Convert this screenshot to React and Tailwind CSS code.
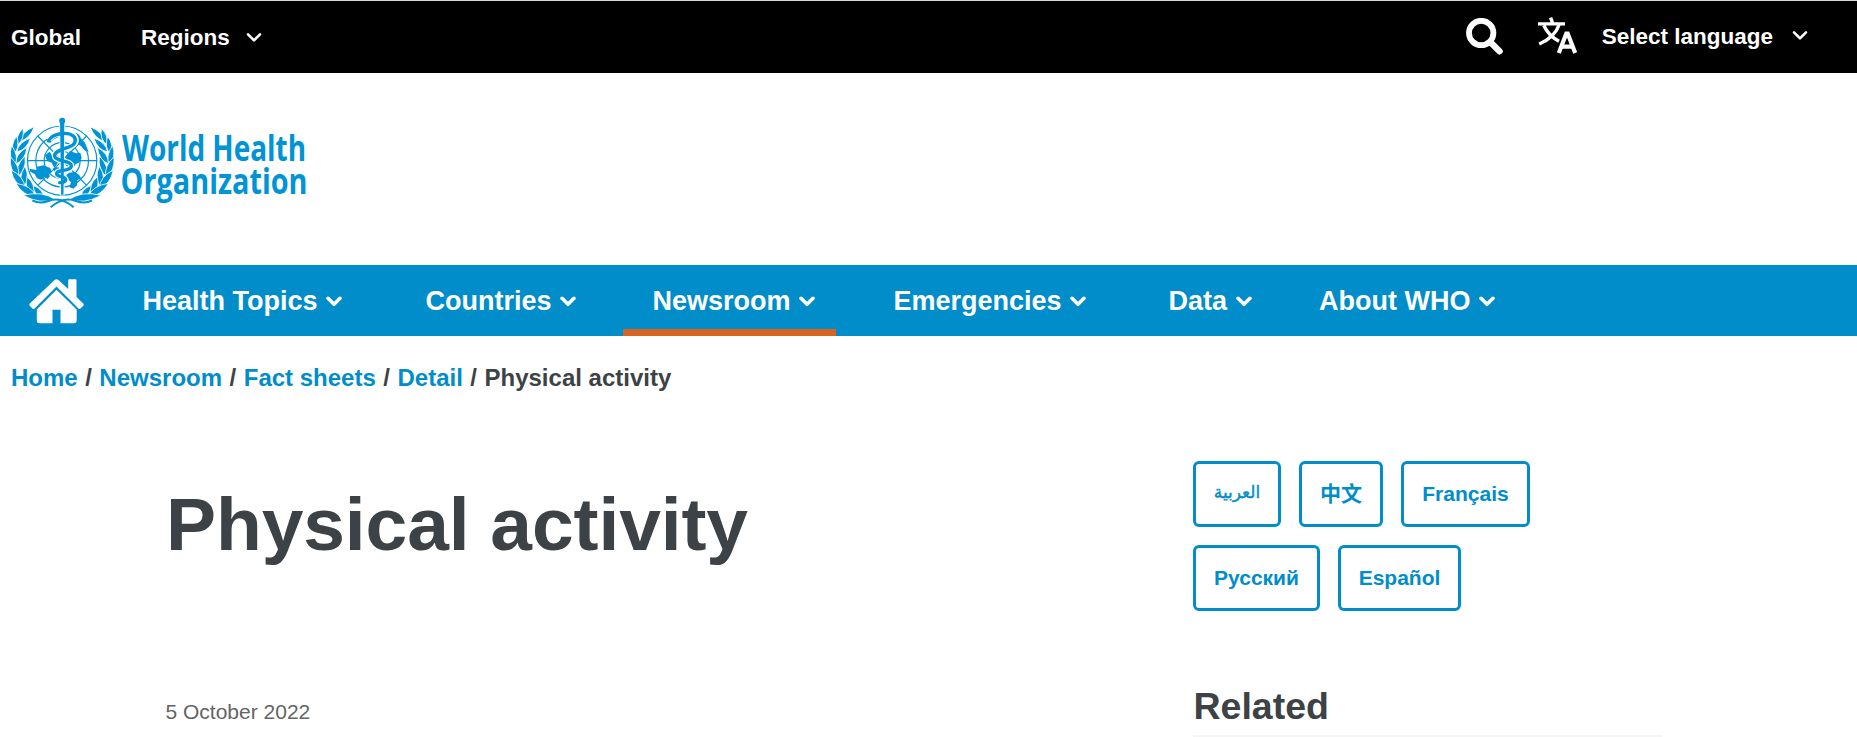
const Chevron = ({ className, weight = 3.6 }) => (
  <svg viewBox="0 0 16 11" className={className} fill="none" stroke="currentColor" strokeWidth={weight} strokeLinecap="round" strokeLinejoin="round">
    <path d="M2 2.3 8 8.3 14 2.3" />
  </svg>
);

// Laurel leaves of the left branch: base x, base y, tip x, tip y, width
const leaves = [
  [44, 88, 88, 44, 18],
  [38, 98, 54, 49, 17],
  [35, 120, 77, 78, 19],
  [27, 126, 35, 72, 18],
  [32, 156, 66, 106, 20],
  [30, 160, 20, 100, 19],
  [38, 194, 60, 132, 21],
  [40, 196, 16, 134, 21],
  [55, 226, 60, 162, 22],
  [60, 228, 18, 174, 22],
  [84, 250, 66, 194, 23],
  [94, 254, 32, 214, 23],
  [116, 260, 84, 220, 20],
  [150, 262, 54, 250, 24],
];

function leafPath([bx, by, tx, ty, w]) {
  const dx = tx - bx;
  const dy = ty - by;
  const len = Math.hypot(dx, dy);
  const nx = (-dy / len) * w * 0.9;
  const ny = (dx / len) * w * 0.9;
  const mx = bx + dx * 0.42;
  const my = by + dy * 0.42;
  return `M${bx} ${by}Q${mx + nx} ${my + ny} ${tx} ${ty}Q${mx - nx} ${my - ny} ${bx} ${by}Z`;
}

const Branch = () => (
  <g>
    {leaves.map((l, i) => (
      <path key={i} d={leafPath(l)} stroke="#fff" strokeWidth="2.5" />
    ))}
  </g>
);

const Emblem = () => (
  <svg viewBox="0 0 345 300" className="h-[100px] w-[115px] shrink-0" fill="#0093d5">
    <Branch />
    <g transform="translate(343 0) scale(-1 1)">
      <Branch />
    </g>
    <g fill="none" stroke="#0093d5" strokeWidth="3.6">
      <circle cx="171.5" cy="146" r="104" />
      <circle cx="171.5" cy="146" r="79" />
      <circle cx="171.5" cy="146" r="54" />
      <circle cx="171.5" cy="146" r="29" />
      <path d="M67 146H276M98 72 245 220M245 72 98 220" />
    </g>
    <path d="M74 170 94 174 96 164 116 160 126 164 136 168 140 180 130 185 135 192 128 201 120 195 108 203 96 199 89 186 76 179Z" />
    <path d="M126 86 134 70 152 60 163 64 160 76 146 82 136 92 126 91Z" />
    <path d="M212 62 222 68 230 82 240 92 246 108 251 120 238 115 228 102 217 95 218 80Z" />
    <path d="M184 130 196 116 212 124 226 122 230 138 222 152 212 156 206 166 190 166 182 156Z" />
    <path d="M120 130 134 119 142 132 154 138 158 154 150 164 140 152 126 146Z" />
    <path d="M192 182 210 180 222 188 228 198 217 205 216 220 205 230 194 226 198 210 186 200 184 190Z" />
    <path d="M144 168 162 166 162 182 152 188Z" />
    <path
      d="M132 84C144 62 188 56 207 71C219 84 212 98 194 105C174 113 146 118 149 133C152 149 200 145 199 162C198 180 154 170 155 186C156 194 172 192 180 199C186 205 180 213 166 212"
      fill="none"
      stroke="#fff"
      strokeWidth="17"
    />
    <path d="M165 30H178L176 248H167Z" stroke="#fff" strokeWidth="5" />
    <path
      d="M132 84C144 64 188 58 205 72C217 84 210 98 194 104C174 112 146 118 149 133C152 149 200 145 199 162C198 180 154 170 155 186C156 194 172 192 180 199C186 205 180 212 164 212"
      fill="none"
      stroke="#0093d5"
      strokeWidth="10"
      strokeLinecap="round"
    />
    <path d="M165 28H178L175.5 248H168.500Z" />
    <circle cx="171.500" cy="26" r="9" />
    <g fill="none" stroke="#0093d5" strokeWidth="6">
      <path d="M82 265Q104 277 130 267T180 269Q194 275 206 286" />
      <path d="M261 265Q239 277 213 267T163 269Q149 275 137 286" />
    </g>
  </svg>
);

const HomeIcon = () => (
  <svg viewBox="0 0 55 45" className="h-[45px] w-[55px]" fill="#fff">
    <path d="M25.500 1Q27.500-.6 29.500 1L39.200 10V1.200Q39.200.2 40.200.2H46.500Q47.500.2 47.500 1.200V18L54.200 24.600Q55.200 26 54 27L51.600 29.600Q50.500 30.500 49.400 29.500L27.500 7.500 5.600 29.500Q4.500 30.500 3.400 29.600L1 27Q-.2 26 .8 24.600Z" />
    <path d="M27.500 10.700 47.700 30.600V41.500Q47.700 44.300 45 44.300H31.500V30.700H23.500V44.300H10.500Q7.800 44.300 7.800 41.500V30.600Z" />
  </svg>
);

const SearchIcon = () => (
  <svg viewBox="0 0 37 37" className="h-[37px] w-[37px]" fill="none" stroke="#fff">
    <circle cx="15.200" cy="15" r="12.200" strokeWidth="5.800" />
    <path d="M24.500 24.300 33.500 33.300" strokeWidth="6.400" strokeLinecap="round" />
  </svg>
);

const TranslateIcon = () => (
  <svg viewBox="0 0 39 37" className="h-[37px] w-[39px]" fill="none" stroke="#fff" strokeWidth="3.400">
    <path d="M12.600.6 14.600 6M0 6.900H27M21.200 7.500C18.500 16 11.500 22.500 1.200 27M5.800 8.500C9 15.500 14 20.500 21 24.200" />
    <path d="M20.800 36 28.300 16.500H29.700L37.200 36M23.500 29.700H34.500" strokeWidth="4.200" />
  </svg>
);

const navItems = [
  { label: "Health Topics", width: "w-[283px] pl-[29px]" },
  { label: "Countries", width: "w-[226.500px] pl-[29px]" },
  { label: "Newsroom", width: "w-[213px] mr-7 pl-[29.500px]", active: true },
  { label: "Emergencies", width: "w-[275px] pl-[29.500px]" },
  { label: "Data", width: "w-[151px] pl-[29.500px]" },
  { label: "About WHO", width: "w-[240px] pl-[29px]" },
];

const crumbs = ["Home", "Newsroom", "Fact sheets", "Detail"];

const LangButton = ({ children, className = "" }) => (
  <a className={`flex h-[66px] items-center justify-center rounded-[6px] border-3 border-[#008dca] text-[21px] font-bold text-[#008dca] ${className}`}>
    {children}
  </a>
);

export default function App() {
  return (
    <div className="flex h-[737px] w-full flex-col overflow-hidden bg-white font-['Liberation_Sans','Noto_Sans_CJK_SC',sans-serif] text-[#3c4245]">
      <div className="flex h-[73px] shrink-0 items-center border-t border-[#d5dbd9] bg-black text-[22.5px] font-bold text-white">
        <a className="ml-[11px] w-[130px] pt-px">Global</a>
        <a className="flex items-center pt-px">
          Regions
          <Chevron className="mb-px ml-4 h-[11px] w-4" weight={2.6} />
        </a>
        <div className="mr-[49px] ml-auto flex items-center">
          <div className="mr-[35px] -mt-px">
            <SearchIcon />
          </div>
          <div className="mr-[25px] -mt-1">
            <TranslateIcon />
          </div>
          <a className="flex items-center">
            Select language
            <Chevron className="mb-[3px] ml-[19px] h-[11px] w-4" weight={2.6} />
          </a>
        </div>
      </div>

      <header className="flex h-48 shrink-0 pt-[39px] pl-[5px]">
        <Emblem />
        <svg viewBox="0 0 190 100" className="h-[100px] w-[190px]" fill="#0093d5">
          <g className="font-['Open_Sans',sans-serif] text-[36px] font-bold">
            <text x="2" y="48.500" textLength="184" lengthAdjust="spacingAndGlyphs">World Health</text>
            <text x="0.500" y="81.500" textLength="187" lengthAdjust="spacingAndGlyphs">Organization</text>
          </g>
        </svg>
      </header>

      <nav className="flex h-[71px] shrink-0 bg-[#008dca] text-[27px] font-bold text-white">
        <a className="w-[113.500px] pt-[13.500px] pl-[29px]">
          <HomeIcon />
        </a>
        {navItems.map((item) => (
          <a
            key={item.label}
            className={`flex items-center border-b-7 pt-[9px] whitespace-nowrap ${item.width} ${item.active ? "border-[#d86422]" : "border-transparent"}`}
          >
            {item.label}
            <Chevron className="mb-px ml-[8.500px] h-[11px] w-4" />
          </a>
        ))}
      </nav>

      <div className="flex shrink-0 gap-[7.500px] pt-6 pl-[11px] text-[24px] leading-9 font-bold">
        {crumbs.map((c) => (
          <span key={c} className="flex gap-[7.500px]">
            <a className="text-[#008dca]">{c}</a>
            <span>/</span>
          </span>
        ))}
        <span>Physical activity</span>
      </div>

      <main className="flex pt-[65px] pl-[165px]">
        <div className="w-[1028px]">
          <h1 className="pt-[18px] pl-px text-[75px] leading-[90px] font-bold tracking-[-0.1px]">Physical activity</h1>
          <p className="mt-[128px] pl-[0.500px] text-[21px] leading-[30px] text-[#646464]">5 October 2022</p>
        </div>
        <aside className="w-[469px]">
          <div className="flex flex-wrap gap-[18px]">
            <LangButton className="w-[88px]">
              <span className="pb-0.5 font-['DejaVu_Sans',sans-serif] text-[17px] font-normal [-webkit-text-stroke:0.4px_#008dca]">العربية</span>
            </LangButton>
            <LangButton className="w-[84px]">中文</LangButton>
            <LangButton className="mr-20 w-[129px]">Français</LangButton>
            <LangButton className="w-[127px]">Русский</LangButton>
            <LangButton className="w-[123px]">Español</LangButton>
          </div>
          <h2 className="mt-[72px] h-[54px] border-b-2 border-[#f5f5f5] pt-px pl-[0.500px] text-[37.500px] leading-[45px] font-bold">Related</h2>
        </aside>
      </main>
    </div>
  );
}
